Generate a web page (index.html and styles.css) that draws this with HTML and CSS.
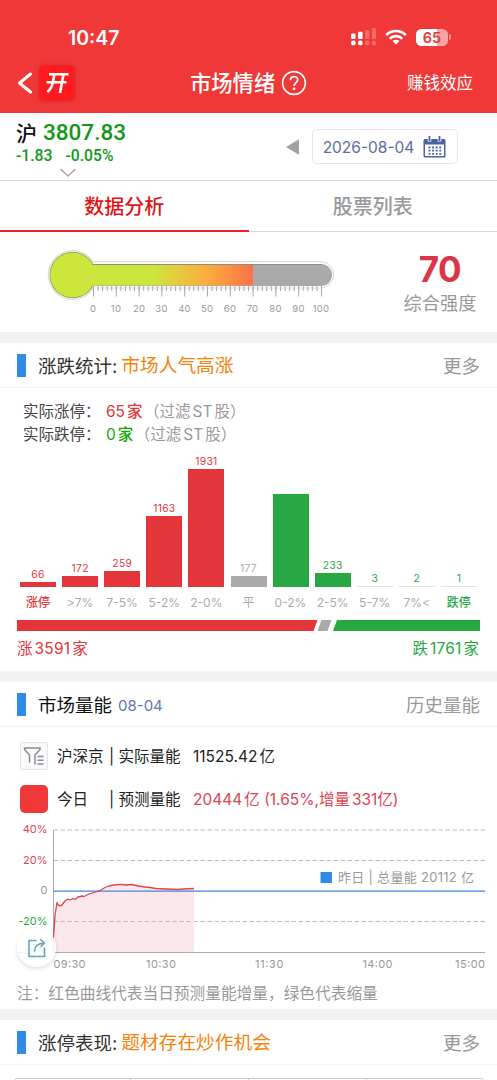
FILE: index.html
```html
<!DOCTYPE html>
<html lang="zh-CN">
<head>
<meta charset="utf-8">
<title>市场情绪</title>
<link rel="stylesheet" href="styles.css">
</head>
<body>
<header class="top">
  <div class="status">
    <span class="clock">10:47</span>
    <div class="status-icons">
      <svg class="signal" width="26" height="18" viewBox="0 0 26 18" fill="#fff">
        <rect x="0" y="5.5" width="4.6" height="5.5" rx="1.2"/><rect x="7" y="3.8" width="4.6" height="7.2" rx="1.2"/>
        <g opacity=".25"><rect x="14" y="2" width="4.6" height="9" rx="1.2"/><rect x="20.8" y="0" width="4.2" height="11" rx="1.2"/></g>
        <rect x="0" y="12.6" width="4.6" height="4.6" rx="1.8"/><rect x="7" y="12.6" width="4.6" height="4.6" rx="1.8"/>
        <g opacity=".25"><rect x="14" y="12.6" width="4.6" height="4.6" rx="1.8"/><rect x="20.8" y="12.6" width="4.2" height="4.6" rx="1.8"/></g>
      </svg>
      <svg class="wifi" width="22" height="16" viewBox="0 0 22 16" fill="none" stroke="#fff" stroke-width="2.7">
        <path d="M1.2 6.1a13.8 13.8 0 0 1 19.6 0"/><path d="M4.7 9.7a8.9 8.9 0 0 1 12.6 0"/>
        <path d="M11 15.8l-3.5-3.7a5 5 0 0 1 7 0z" fill="#fff" stroke="none"/>
      </svg>
      <div class="battery"><span>65</span></div><i class="battery-tip"></i>
    </div>
  </div>
  <nav class="nav">
    <svg class="back" width="16" height="22" viewBox="0 0 16 22" fill="none" stroke="#fff" stroke-width="3" stroke-linecap="round" stroke-linejoin="round"><path d="M13.500 2L2.500 11l11 9"/></svg>
    <div class="logo">
      <svg width="24" height="22" viewBox="0 0 24 22" fill="none" stroke="#fff" stroke-width="2.600"><path d="M4 2.300h19.500M1.500 10.300h20M9.500 2.300L7.800 10.300Q6.800 16.500 2.300 20M18.500 2.300L15 21"/></svg>
    </div>
    <h1>市场情绪</h1>
    <svg class="help" width="26" height="26" viewBox="0 0 26 26" fill="none" stroke="#fff" stroke-width="1.6"><circle cx="13" cy="13" r="11.4"/><path d="M9.4 10.3c0-5 7.3-4.8 7.3-.5 0 2.8-3.600 3-3.600 6.200" stroke-width="1.700"/><circle cx="13.100" cy="18.800" r=".6"/></svg>
    <a class="effect">赚钱效应</a>
  </nav>
</header>

<section class="index">
  <div class="quote">
    <div class="quote-main"><b>沪</b><span>3807.83</span></div>
    <div class="quote-sub"><span>-1.83</span><span>-0.05%</span></div>
    <svg class="chev" width="18" height="10" viewBox="0 0 18 10" fill="none" stroke="#aaa" stroke-width="1.6"><path d="M1.5 1L9 8l7.5-7"/></svg>
  </div>
  <svg class="prev" width="13" height="16" viewBox="0 0 13 16" fill="#a2a2a2"><path d="M0 8L12 .7Q13 .3 13 1.500v13q0 1.200-1 .8z"/></svg>
  <div class="date">
    <span>2026-08-04</span>
    <svg width="23" height="22" viewBox="0 0 23 22" fill="#4c619f">
      <path d="M2 3h19q1.500 0 1.500 1.500V20q0 1.500-1.500 1.500H2Q.5 21.500.5 20V4.500Q.5 3 2 3z"/>
      <path d="M2 8.500h19V20H2z" fill="#fff"/>
      <path d="M6.500.5v5M16.500.5v5" stroke="#fff" stroke-width="3.600"/><path d="M6.500 0v5M16.500 0v5" stroke="#4c619f" stroke-width="1.800"/>
      <path d="M5.500 11.500h13M5.500 14.700h13M5.500 17.900h13" stroke="#4c619f" stroke-width="1.800" stroke-dasharray="1.900 1.700"/>
    </svg>
  </div>
</section>

<div class="tabs"><a class="tab active">数据分析</a><a class="tab">股票列表</a></div>

<section class="gauge">
  <svg width="350" height="100" viewBox="0 232 350 100">
    <defs><linearGradient id="heat" gradientUnits="userSpaceOnUse" x1="93" y1="0" x2="253" y2="0">
      <stop offset="0" stop-color="#cde63c"/><stop offset=".37" stop-color="#cde63c"/><stop offset=".7" stop-color="#fbaf3f"/><stop offset="1" stop-color="#fd7148"/>
    </linearGradient></defs>
    <g fill="#ddd"><circle cx="72.700" cy="275" r="25"/><rect x="80" y="261" width="254" height="27.500" rx="13.700"/></g>
    <g fill="#fff"><circle cx="72.700" cy="275" r="23.800"/><rect x="80" y="262.200" width="252.800" height="25.200" rx="12.500"/></g>
    <g fill="#8f9560"><circle cx="72.700" cy="275" r="23.200"/></g>
    <rect x="80" y="264" width="252" height="22" rx="11" fill="#aaa"/>
    <path d="M80 265h173v20.500H80z" fill="url(#heat)"/>
    <path d="M92 264.500h230" stroke="#8d8d83" stroke-width="1"/>
    <circle cx="72.700" cy="275" r="22.500" fill="#cde63c"/>
    <path d="M93 288.500h230" stroke="#aaa" stroke-width="5" stroke-dasharray="1 3.560"/>
    <path d="M93 291h230" stroke="#aaa" stroke-width="11" stroke-dasharray="1 21.800"/>
    <g class="scale">
      <text x="93" y="311.500">0</text><text x="116" y="311.500">10</text><text x="139" y="311.500">20</text><text x="161.500" y="311.500">30</text><text x="184.500" y="311.500">40</text><text x="207" y="311.500">50</text><text x="230" y="311.500">60</text><text x="252.500" y="311.500">70</text><text x="275.500" y="311.500">80</text><text x="298.500" y="311.500">90</text><text x="321" y="311.500">100</text>
    </g>
  </svg>
  <div class="score"><strong>70</strong><span>综合强度</span></div>
</section>

<section class="card">
  <div class="head"><i></i><h2>涨跌统计:</h2><em>市场人气高涨</em><a>更多</a></div>
  <div class="limits">
    <p><span class="lbl">实际涨停：</span><span class="up">65<b>家</b></span><span class="note">（过滤<u>ST</u>股）</span></p>
    <p><span class="lbl">实际跌停：</span><span class="down">0<b>家</b></span><span class="note">（过滤<u>ST</u>股）</span></p>
  </div>
  <div class="bars">
    <div class="col red"><span>66</span><i style="height:5px"></i></div>
    <div class="col red"><span>172</span><i style="height:11px"></i></div>
    <div class="col red"><span>259</span><i style="height:16.500px"></i></div>
    <div class="col red"><span>1163</span><i style="height:71.500px"></i></div>
    <div class="col red"><span>1931</span><i style="height:118.500px"></i></div>
    <div class="col gray"><span>177</span><i style="height:11.500px"></i></div>
    <div class="col green"><i style="height:93.500px"></i></div>
    <div class="col green"><span>233</span><i style="height:14.500px"></i></div>
    <div class="col green faint"><span>3</span><i style="height:1px"></i></div>
    <div class="col green faint"><span>2</span><i style="height:1px"></i></div>
    <div class="col green faint"><span>1</span><i style="height:1px"></i></div>
  </div>
  <div class="cats"><span class="up">涨停</span><span>&gt;7%</span><span>7-5%</span><span>5-2%</span><span>2-0%</span><span>平</span><span>0-2%</span><span>2-5%</span><span>5-7%</span><span>7%&lt;</span><span class="fall">跌停</span></div>
  <svg class="ratio" width="463" height="11" viewBox="0 0 463 11"><path d="M0 0h300.500l-4 11H0z" fill="#e2363a"/><path d="M304.500 0h10l-4 11h-10z" fill="#aaa"/><path d="M320 0h143v11H316z" fill="#27a844"/></svg>
  <div class="totals"><span class="up">涨<u>3591</u>家</span><span class="fall">跌<u>1761</u>家</span></div>
</section>

<section class="card volume">
  <div class="head"><i></i><h2 class="dark">市场量能</h2><small>08-04</small><a>历史量能</a></div>
  <div class="line first">
    <div class="filter"><svg width="22" height="20" viewBox="0 0 22 20" fill="none" stroke="#8c8c8c" stroke-width="1.500"><path d="M6.500 16.500V9L1.500 3.500V2h15.500v1.500L12 9v9.500M14.500 10.500h6M14.500 14.200h6M14.500 17.900h6"/></svg></div>
    <span class="who">沪深京</span><span class="what">| 实际量能</span><span class="val">11525.42<b>亿</b></span>
  </div>
  <div class="line second">
    <div class="swatch"></div>
    <span class="who">今日</span><span class="what">| 预测量能</span><span class="val up">20444<b>亿</b> (1.65%,增量<b>331</b>亿)</span>
  </div>
  <div class="chart">
    <svg width="497" height="162" viewBox="0 820 497 162">
      <path class="area" d="M53.500 952V937L55 915 57 902.500 58.500 905.500 61.500 905.500 65 901 68 899 70 900 73 898.500 75 899.500 78 897 82 896 84 896.500 89 894 97 891.500 101 890 105 887.500 109 886 114 885 120 884.300 126 885 132 884.500 138 886 145 887 150 887.500 156 888.500 166 889 178 889.500 183 889 194 888.500V952z"/>
      <path class="grid" d="M53.500 830H485M53.500 860.500H485M53.500 921.500H485"/>
      <path d="M53.500 830V952.500H485" fill="none" stroke="#aaa"/>
      <path d="M53.500 891.200H485" stroke="#3e85df" stroke-width="1.300"/>
      <path class="curve" d="M53.500 937L55 915 57 902.500 58.500 905.500 61.500 905.500 65 901 68 899 70 900 73 898.500 75 899.500 78 897 82 896 84 896.500 89 894 97 891.500 101 890 105 887.500 109 886 114 885 120 884.300 126 885 132 884.500 138 886 145 887 150 887.500 156 888.500 166 889 178 889.500 183 889 194 888.500"/>
      <g class="ylab"><text x="47.500" y="833" fill="#dd4655">40%</text><text x="47.500" y="864" fill="#dd4655">20%</text><text x="47.500" y="894" fill="#999">0</text><text x="47.500" y="925" fill="#27a844">-20%</text><text x="47.500" y="956" fill="#27a844">-40%</text></g>
      <g class="xlab"><text x="53.500" y="967.500" textLength="32">09:30</text><text x="146" y="967.500" textLength="30">10:30</text><text x="255" y="967.500" textLength="28.500">11:30</text><text x="362.500" y="967.500" textLength="30">14:00</text><text x="455" y="967.500" textLength="30">15:00</text></g>
      <rect x="320.500" y="872" width="11.500" height="11" fill="#2e8be6"/>
      <text class="legend" x="338" y="882" textLength="136">昨日 | 总量能 20112 亿</text>
    </svg>
    <div class="share"><svg width="20" height="20" viewBox="0 0 20 20" fill="none" stroke="#62a9bd" stroke-width="1.600" stroke-linejoin="round" stroke-linecap="round"><path d="M9 2.500H2V18.500H17.500V10M7.500 13Q8 5.500 17 5M13.500 1.500L17.500 5l-3.500 3.500"/></svg></div>
  </div>
  <p class="remark">注：红色曲线代表当日预测量能增量，绿色代表缩量</p>
</section>

<section class="card">
  <div class="head"><i></i><h2>涨停表现:</h2><em>题材存在炒作机会</em><a>更多</a></div>
  <div class="table"><i></i><i></i><i></i><i></i></div>
</section>
</body>
</html>
```
FILE: styles.css
```css
* { box-sizing: border-box; margin: 0; padding: 0; }
body { width: 497px; height: 1080px; overflow: hidden; background: #fff; font-family: Inter, "Noto Sans CJK SC", sans-serif; color: #333; }
i, em { font-style: normal; }
u { text-decoration: none; }
b { font-weight: inherit; }
svg { display: block; flex: none; }
span, a, small, h1, h2, em, strong { white-space: nowrap; }

.top { height: 113px; background: #f03838; color: #fff; padding-top: 22px; }
.status { height: 30px; display: flex; align-items: center; justify-content: space-between; padding: 0 46px 0 68px; }
.clock { font-size: 19.5px; font-weight: 600; line-height: 30px; padding-top: 1px; }
.status-icons { display: flex; align-items: center; }
.wifi { margin: 0 9px 0 8px; }
.battery { width: 32px; height: 17px; border-radius: 5.5px; background: linear-gradient(90deg, #fff 65%, #f9a5a5 65%); color: #e23a3a; font-size: 14.500px; font-weight: 600; line-height: 17px; text-align: center; }
.battery-tip { width: 2px; height: 6px; margin-left: 1px; border-radius: 0 2px 2px 0; background: #f79c9c; }
.nav { height: 61px; display: flex; align-items: center; padding: 0 24px 0 17px; }
.logo { width: 36px; height: 36px; margin-left: 6px; border-radius: 5px; background: #fd1b1d; display: flex; align-items: center; justify-content: center; box-shadow: 0 0 4px #a83030aa; }
h1 { margin-left: 115px; font-size: 21.3px; font-weight: 500; line-height: 30px; }
.help { margin-left: 6px; }
.effect { margin-left: auto; font-size: 16.5px; line-height: 24px; }

.index { height: 68px; border-bottom: 1px solid #d6d6d6; display: flex; align-items: center; padding: 0 39px 0 16px; }
.quote { width: 271px; height: 67px; padding-top: 7px; }
.quote-main { height: 25px; display: flex; align-items: center; color: #11981a; font: 500 22.500px/25px Roboto, sans-serif; }
.quote-main b { width: 27px; color: #111; font: 500 21px/25px "Noto Sans CJK SC", sans-serif; }
.quote-sub { height: 21px; display: flex; gap: 13px; color: #11981a; font: 500 15.700px/22px Roboto, sans-serif; }
.chev { margin: 2px 0 0 43px; }
.prev { margin-right: 12px; }
.date { width: 147px; height: 35px; margin-left: 1px; border: 1px solid #e4e6ea; border-radius: 5px; display: flex; align-items: center; justify-content: space-between; padding: 0 11px 0 10px; color: #5b6ca3; font-size: 15.500px; }
.date span { padding-top: 2px; }

.tabs { height: 51px; display: flex; border-bottom: 1px solid #d8d8d8; }
.tab { flex: 1; height: 51px; text-align: center; font-size: 20px; font-weight: 500; line-height: 52px; color: #999; }
.tab.active { color: #e01414; border-bottom: 2px solid #ec2226; }

.gauge { height: 100px; display: flex; }
.scale { font-size: 9.500px; fill: #999; text-anchor: middle; letter-spacing: .2px; }
.score { width: 147px; padding: 16px 0 0 33px; display: flex; flex-direction: column; align-items: center; }
.score strong { color: #dc3545; font-size: 35px; line-height: 42px; font-weight: 700; letter-spacing: -.5px; }
.score span { color: #999; font-size: 18.200px; line-height: 26px; }

.card { border-top: 11px solid #f2f2f2; }
.head { height: 45px; border-bottom: 1px solid #f2f2f2; display: flex; align-items: center; padding: 0 17px; }
.head > i { width: 9px; height: 23px; margin-right: 12px; background: #2e8be6; }
h2 { padding-top: 1px; font-size: 18.500px; line-height: 28px; font-weight: 400; color: #333; }
h2.dark { color: #111; }
.head em { margin-left: 4px; padding-top: 2px; font-size: 18.700px; line-height: 28px; color: #f5820a; }
.head a { margin-left: auto; padding-top: 1px; font-size: 18.500px; line-height: 28px; color: #999; }
.head small { margin: 3px 0 0 6px; font-size: 15px; color: #6474ab; }

.limits { height: 70px; padding: 12px 0 0 23px; }
.limits p { display: flex; height: 23px; align-items: center; font-size: 15.500px; line-height: 23px; }
.lbl { width: 83px; color: #444; }
.limits b { font-weight: 500; margin-left: 2px; }
.note { margin-left: 1.500px; color: #999; }
.note u { margin: 0 2px; }
.up { color: #e2363a; }
.down { color: #16a40c; }
.fall { color: #27a844; }

.bars { height: 129px; display: flex; align-items: flex-end; gap: 6px; padding: 0 14px 0 20px; }
.col { width: 36.100px; flex: none; display: flex; flex-direction: column; align-items: center; }
.col span { font-size: 10.300px; line-height: 14px; letter-spacing: .3px; margin-bottom: 1px; }
.col i { width: 36px; flex: none; background: currentColor; }
.red { color: #e2363a; }
.gray { color: #aaa; }
.green { color: #27a844; }
.faint i { background: #dce9df; }
.cats { display: flex; height: 33px; padding: 6px 17px 0 17px; }
.cats span { width: 42.090px; text-align: center; flex: none; font-size: 12px; line-height: 20px; color: #aaa; }
.cats .up { color: #e2363a; font-weight: 500; }
.cats .fall { color: #27a844; font-weight: 500; }
.ratio { margin-left: 17px; }
.totals { height: 40px; display: flex; justify-content: space-between; padding: 6px 18px 0 17px; font-size: 15.500px; line-height: 24px; }
.totals u { margin: 0 2px; letter-spacing: .2px; }

.line { display: flex; align-items: center; padding-left: 20px; font-size: 15.500px; color: #222; }
.line.first { height: 57px; }
.line.second { height: 30px; }
.filter { width: 28px; height: 28px; border: 1px solid #e2e4e8; background: #f9fafc; border-radius: 2px; display: flex; align-items: center; justify-content: center; }
.swatch { width: 28px; height: 28px; border-radius: 5px; background: #f03838; }
.line span { padding-bottom: 2px; }
.who { margin-left: 9px; width: 52px; }
.what { width: 84px; }
.val b { margin-left: 2px; }
.line .up { color: #dc4450; }
.chart { position: relative; height: 162px; margin-top: 6px; }
.area { fill: #fce8ea; }
.curve { fill: none; stroke: #dc4450; stroke-width: 1.300; stroke-linejoin: round; }
.grid { fill: none; stroke: #bbb; stroke-dasharray: 4.500 2.500; }
.ylab { font-size: 11px; text-anchor: end; }
.xlab { font-size: 11px; fill: #999; }
.legend { font-size: 13px; fill: #999; }
.share { position: absolute; left: 17px; top: 108px; width: 39px; height: 39px; border-radius: 50%; background: #ffffffdd; box-shadow: 0 2px 4px #0002; display: flex; align-items: center; justify-content: center; }
.remark { height: 27px; padding-left: 17px; font-size: 15.700px; line-height: 24px; color: #999; white-space: nowrap; }
.table { display: flex; margin: 13px 13px 0 14px; height: 20px; border: 1px solid #ccc; border-radius: 3px; }
.table i { width: 118px; border-right: 1px solid #ccc; }
.table i:first-child { width: 116px; }
.table i:last-child { width: auto; flex: 1; border: 0; }
```
